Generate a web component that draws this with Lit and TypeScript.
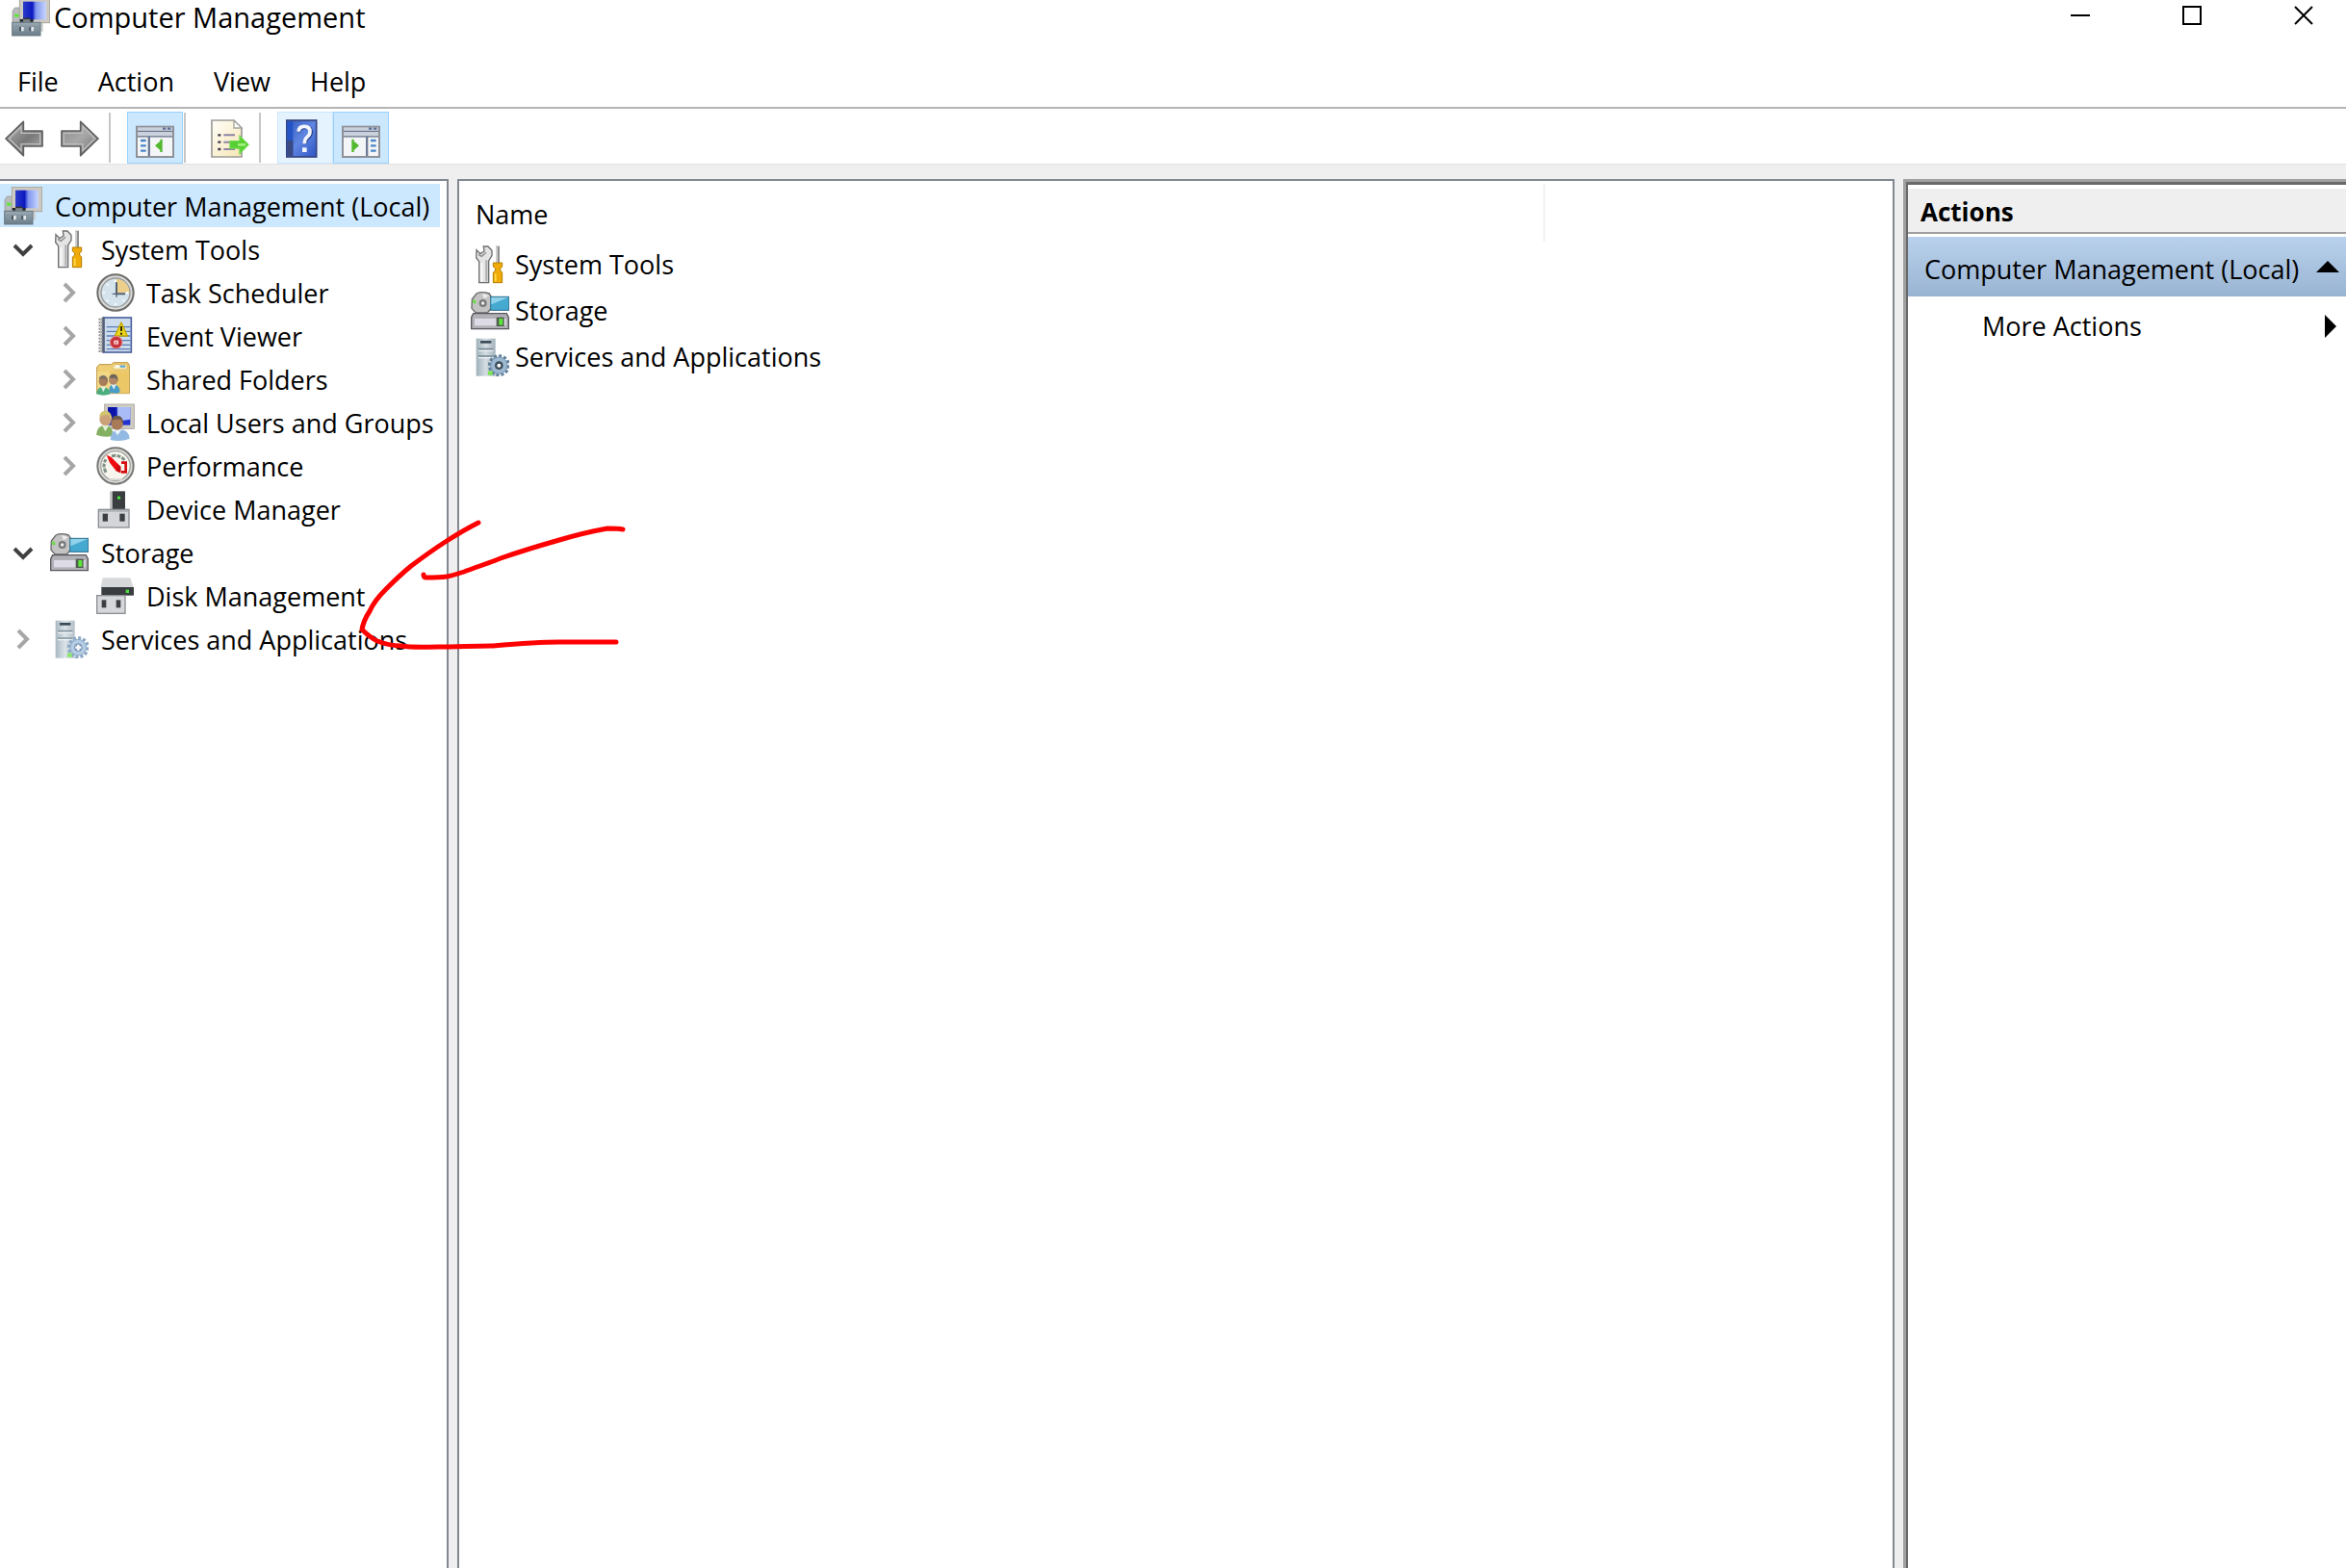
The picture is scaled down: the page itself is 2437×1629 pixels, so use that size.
import { LitElement, html, css, svg, nothing, type SVGTemplateResult } from "lit";
import { customElement, property, state } from "lit/decorators.js";
import { classMap } from "lit/directives/class-map.js";

/** Icon artwork, drawn on a 120-unit square. */
const ICONS: Record<string, SVGTemplateResult> = {
  computer: svg`
    <defs>
      <linearGradient id="scr" x1="0" y1="0" x2="1" y2="0">
        <stop offset="0" stop-color="#2a3cc8"/><stop offset=".4" stop-color="#0c18c0"/>
        <stop offset=".55" stop-color="#7f95ee"/><stop offset="1" stop-color="#c9d6ff"/>
      </linearGradient>
      <linearGradient id="box" x1="0" y1="0" x2="0" y2="1">
        <stop offset="0" stop-color="#9aa9b2"/><stop offset="1" stop-color="#6b7e89"/>
      </linearGradient>
    </defs>
    <path d="M3 40 L10 30 H30 V76 H3Z" fill="#b9bcbc" stroke="#8c9090" stroke-width="2"/>
    <rect x="9" y="50" width="14" height="9" fill="#5ee63c"/>
    <rect x="25" y="1" width="94" height="76" fill="#cdcac2" stroke="#a8a59d" stroke-width="3"/>
    <rect x="36" y="11" width="72" height="56" fill="url(#scr)"/>
    <path d="M78 78 H98 V104 H90Z" fill="#cccdcd"/>
    <path d="M26 76 L34 66 H60 L68 76Z" fill="#80868a"/>
    <path d="M26 70 H36 M58 70 H68" stroke="#22262c" stroke-width="8"/>
    <path d="M36 64 H58" stroke="#30353c" stroke-width="5"/>
    <rect x="2" y="76" width="88" height="41" fill="url(#box)" stroke="#687984" stroke-width="3"/>
    <path d="M3 89 H89" stroke="#8494a0" stroke-width="3"/>
    <path d="M27 90 V103 M58 90 V103" stroke="#4a5660" stroke-width="6"/>
    <path d="M34 90 V103 M65 90 V103" stroke="#e4e8ea" stroke-width="8"/>`,
  tools: svg`
    <path d="M18 14 L30 26 L42 18 L40 3 H54 L66 16 V32 L56 48 V116 H26 V50 L17 38Z" fill="#e4e4e4" stroke="#6e6e6e" stroke-width="4"/>
    <path d="M34 54 V112" stroke="#fafafa" stroke-width="6"/>
    <path d="M49 46 V112" stroke="#ababab" stroke-width="6"/>
    <path d="M24 28 L34 34 L48 22" stroke="#8a8a8a" stroke-width="4" fill="none"/>
    <path d="M84 2 V54" stroke="#8f8f8f" stroke-width="12"/>
    <path d="M81 4 V54" stroke="#dcdcdc" stroke-width="5"/>
    <path d="M70 54 H98 V66 L92 72 V78 L98 84 V116 H70 V84 L77 78 V72 L70 66Z" fill="#f0ab08" stroke="#b57c00" stroke-width="3"/>
    <path d="M77 88 V112" stroke="#ffdd4c" stroke-width="5"/>`,
  clock: svg`
    <circle cx="60" cy="60" r="56" fill="#d9d9d7" stroke="#6b6b69" stroke-width="6"/>
    <circle cx="60" cy="60" r="45" fill="#d5e3ec" stroke="#94989a" stroke-width="4"/>
    <path d="M62 17 A43 43 0 0 1 103 60 H62Z" fill="#edcf8c"/>
    <path d="M60 20 V27 M60 93 V100 M20 60 H27 M93 60 H100 M33 33 L37 37 M33 87 L37 83 M87 87 L83 83" stroke="#f8fbfc" stroke-width="6"/>
    <path d="M63 28 V64 H90" fill="none" stroke="#536273" stroke-width="6"/>
    <path d="M50 64 H63 V74" fill="none" stroke="#536273" stroke-width="4"/>`,
  events: svg`
    <rect x="22" y="3" width="87" height="108" fill="#cddcec" stroke="#4e639e" stroke-width="5"/>
    <path d="M32 32 H106 M32 46 H106 M32 60 H106 M32 74 H106 M32 88 H106 M32 101 H106" stroke="#5b7db8" stroke-width="4"/>
    <path d="M22 2 V112" stroke="#56607c" stroke-width="9"/>
    <path d="M14 5 V111" stroke="#8d8d8d" stroke-width="13" stroke-dasharray="6 4"/>
    <path d="M14 5 V111" stroke="#c6c6c6" stroke-width="4"/>
    <path d="M78 18 L97 60 H58Z" fill="#ecd51c" stroke="#c2a800" stroke-width="4" stroke-linejoin="round"/>
    <path d="M78 30 V45 M78 50 V56" stroke="#332e00" stroke-width="6"/>
    <circle cx="62" cy="80" r="19" fill="#c8323a" stroke="#e58d90" stroke-width="3"/>
    <rect x="55" y="74" width="14" height="12" fill="#fbe9e9"/>
    <path d="M58 77 L66 83 M66 77 L58 83" stroke="#c8323a" stroke-width="2"/>`,
  shared: svg`
    <g transform="translate(0 8)">
    <path d="M2 14 L10 6 H46 L54 0 H98 L103 8 V96 H2Z" fill="#efce74" stroke="#bb9440" stroke-width="3"/>
    <path d="M50 14 L56 6 H96 V22 H54Z" fill="#f6e6b0" stroke="#cfaa52" stroke-width="2"/>
    <path d="M60 12 H74" stroke="#ffffff" stroke-width="6"/>
    <path d="M74 12 H90" stroke="#4aa2dc" stroke-width="6"/>
    <path d="M3 28 H101 V95 H3Z" fill="#f3d785"/>
    <path d="M40 28 H101 V95 H70Z" fill="#ebc765"/>
    <path d="M40 94 Q38 68 54 68 Q73 70 74 92 L66 96Z" fill="#4a9cc8"/>
    <path d="M46 68 L55 84 L62 68Z" fill="#e0eef6"/>
    <circle cx="53" cy="55" r="14" fill="#b08866"/>
    <path d="M40 48 Q42 36 54 36 Q69 37 67 58 L60 48Z" fill="#6a645c"/>
    <path d="M0 98 Q2 76 22 76 Q42 78 44 98 Q24 106 0 98Z" fill="#4cae7e"/>
    <path d="M14 75 L22 92 L30 75Z" fill="#d9efe2"/>
    <circle cx="22" cy="59" r="14" fill="#a87c58"/>
    <path d="M8 52 Q10 40 22 40 Q36 41 36 60 L28 50Z" fill="#7a7064"/>
    </g>`,
  users: svg`
    <rect x="26" y="3" width="92" height="76" fill="#cfccc4" stroke="#aeaba3" stroke-width="3"/>
    <rect x="36" y="12" width="70" height="56" fill="#2333d2"/>
    <path d="M66 12 H106 V50 L66 56Z" fill="#a9bcf8"/>
    <path d="M36 12 H62 V44 H36Z" fill="#0c14a8"/>
    <path d="M0 98 Q2 68 28 68 Q54 70 52 102 Q24 108 0 98Z" fill="#84b062"/>
    <path d="M18 68 L28 88 L40 68Z" fill="#e2efd6"/>
    <circle cx="29" cy="50" r="19" fill="#cba27a"/>
    <path d="M10 44 Q10 22 30 23 Q50 26 48 52 L38 36 L20 38Z" fill="#d2c470"/>
    <path d="M44 114 Q44 82 72 80 Q102 82 104 110 Q76 122 44 114Z" fill="#93bae2"/>
    <path d="M54 80 L66 100 L80 80Z" fill="#eef5fc"/>
    <circle cx="65" cy="64" r="19" fill="#a87a58"/>
    <path d="M46 54 Q50 38 66 38 Q86 40 84 66 L76 50 L56 50Z" fill="#6a5a4c"/>`,
  performance: svg`
    <circle cx="60" cy="60" r="56" fill="#dcdcda" stroke="#777775" stroke-width="6"/>
    <circle cx="60" cy="60" r="46" fill="#f7f5ee" stroke="#a2a29f" stroke-width="4"/>
    <path d="M30 80 Q18 58 30 40 M48 29 Q74 24 88 42" fill="none" stroke="#7e9084" stroke-width="9" stroke-dasharray="12 4"/>
    <path d="M32 26 L46 32 L76 62 V82 L62 76 L42 50Z" fill="#f00c10"/>
    <path d="M62 76 L66 54 L76 62 V82Z" fill="#c80c10"/>
    <path d="M78 50 H92 V79 H78" fill="none" stroke="#d60c10" stroke-width="8"/>
    <path d="M40 102 H82" stroke="#dad8d0" stroke-width="5"/>`,
  device: svg`
    <path d="M42 4 H50 V62 H42Z" fill="#c4c6c8"/>
    <rect x="50" y="4" width="40" height="56" fill="#3b3e40"/>
    <rect x="66" y="20" width="9" height="9" fill="#46e63c"/>
    <rect x="7" y="61" width="95" height="56" fill="#d3d5d9" stroke="#8c8f94" stroke-width="4"/>
    <path d="M9 66 H100" stroke="#a6a9ae" stroke-width="4"/>
    <rect x="20" y="74" width="16" height="24" fill="#3c3f42"/>
    <rect x="73" y="74" width="16" height="24" fill="#3c3f42"/>`,
  storage: svg`
    <path d="M4 24 L18 6 Q34 -2 58 6 L68 22 V46 L52 66 H16 L3 52Z" fill="#c3c3c3" stroke="#6a6a6a" stroke-width="4"/>
    <circle cx="38" cy="36" r="12" fill="#77797b"/>
    <circle cx="38" cy="36" r="5" fill="#f2f2f2"/>
    <path d="M36 6 L42 22 L56 12Z" fill="#efefef"/>
    <path d="M8 26 L14 36" stroke="#6cdc4a" stroke-width="9"/>
    <rect x="62" y="16" width="57" height="42" fill="#46a9d0" stroke="#2a6f90" stroke-width="3"/>
    <path d="M64 18 H117 L64 40Z" fill="#8fd2ea"/>
    <path d="M8 68 H112 L118 80 V116 H2 V80Z" fill="#b2b1b8" stroke="#58585e" stroke-width="4"/>
    <rect x="12" y="84" width="98" height="22" fill="#dddce6"/>
    <rect x="80" y="80" width="24" height="28" fill="#4f5c4e"/>
    <rect x="88" y="84" width="12" height="20" fill="#5ce63a"/>`,
  disk: svg`
    <path d="M20 4 H106 L116 34 H14Z" fill="#d6d8da"/>
    <rect x="16" y="33" width="101" height="26" fill="#393d40"/>
    <rect x="92" y="41" width="10" height="10" fill="#48e03c"/>
    <rect x="2" y="59" width="88" height="56" fill="#d6d7db" stroke="#8c8f94" stroke-width="4"/>
    <rect x="17" y="73" width="14" height="24" fill="#3c3f42"/>
    <rect x="62" y="73" width="14" height="24" fill="#3c3f42"/>`,
  services: svg`
    <defs><linearGradient id="twr" x1="0" y1="0" x2="1" y2="0">
      <stop offset="0" stop-color="#9fb0bb"/><stop offset=".5" stop-color="#d4dee3"/><stop offset="1" stop-color="#a4b2bb"/>
    </linearGradient></defs>
    <rect x="17" y="2" width="60" height="117" fill="url(#twr)"/>
    <rect x="30" y="9" width="34" height="8" fill="#3b4b57"/>
    <path d="M24 35 H70 M24 57 H70" stroke="#768893" stroke-width="5"/>
    <path d="M24 40 H70 M24 62 H70" stroke="#eef3f5" stroke-width="4"/>
    <circle cx="88" cy="86" r="29" fill="none" stroke="#62809a" stroke-width="11" stroke-dasharray="9 6"/>
    <circle cx="88" cy="86" r="26" fill="#9db9d2" stroke="#7393b0" stroke-width="3"/>
    <circle cx="88" cy="86" r="13" fill="#3d4c5a"/>
    <circle cx="88" cy="86" r="6" fill="#ffffff"/>
    <rect x="54" y="104" width="14" height="12" fill="#7ae64c"/>`,
  servicesLight: svg`
    <defs><linearGradient id="twl" x1="0" y1="0" x2="1" y2="0">
      <stop offset="0" stop-color="#a9b8c2"/><stop offset=".5" stop-color="#dbe3e8"/><stop offset="1" stop-color="#b2bec6"/>
    </linearGradient></defs>
    <rect x="17" y="2" width="60" height="117" fill="url(#twl)"/>
    <rect x="30" y="9" width="34" height="8" fill="#3b4b57"/>
    <path d="M24 35 H70 M24 57 H70" stroke="#8496a0" stroke-width="5"/>
    <path d="M24 40 H70 M24 62 H70" stroke="#f2f6f8" stroke-width="4"/>
    <circle cx="88" cy="86" r="29" fill="none" stroke="#8ba8c6" stroke-width="11" stroke-dasharray="9 6"/>
    <circle cx="88" cy="86" r="25" fill="#b4cce4" stroke="#8cabca" stroke-width="3"/>
    <circle cx="88" cy="86" r="13" fill="#7f9ab8"/>
    <path d="M88 77 V95 M79 86 H97" stroke="#ffffff" stroke-width="7"/>
    <rect x="54" y="104" width="14" height="12" fill="#8ae868"/>`,
  back: svg`
    <defs><linearGradient id="arr" x1="0" y1="0" x2="1" y2="1">
      <stop offset="0" stop-color="#b4b4b4"/><stop offset=".55" stop-color="#787878"/><stop offset="1" stop-color="#b0b0b0"/>
    </linearGradient></defs>
    <path d="M3 60 L58 7 V36 H117 V84 H58 V113Z" fill="url(#arr)" stroke="#5f5f5f" stroke-width="5" stroke-linejoin="round"/>
    <path d="M13 60 L51 23 V43 H110 V77 H51 V97Z" fill="none" stroke="#bdbdbd" stroke-width="4"/>`,
  forward: svg`
    <defs><linearGradient id="arf" x1="0" y1="0" x2="1" y2="1">
      <stop offset="0" stop-color="#8a8a8a"/><stop offset=".5" stop-color="#a8a8a8"/><stop offset="1" stop-color="#6e6e6e"/>
    </linearGradient></defs>
    <path d="M117 60 L62 7 V36 H3 V84 H62 V113Z" fill="url(#arf)" stroke="#5f5f5f" stroke-width="5" stroke-linejoin="round"/>
    <path d="M107 60 L69 23 V43 H10 V77 H69 V97Z" fill="none" stroke="#bdbdbd" stroke-width="4"/>`,
  treePane: svg`
    <rect x="3" y="23" width="114" height="94" fill="#f4f5f6" stroke="#8e9298" stroke-width="6"/>
    <rect x="6" y="26" width="108" height="8" fill="#c9d0dc"/>
    <path d="M84 29 H94 M99 29 H109" stroke="#5d6f96" stroke-width="7"/>
    <rect x="6" y="35" width="108" height="5" fill="#6b7790"/>
    <rect x="6" y="40" width="108" height="11" fill="#ccd2dc"/>
    <rect x="6" y="51" width="108" height="5" fill="#848da0"/>
    <rect x="38" y="54" width="7" height="60" fill="#6d7a96"/>
    <path d="M15 66 H32 M15 82 H32 M15 98 H32" stroke="#4a86c8" stroke-width="7"/>
    <path d="M83 62 V102 H76 V96 L60 82 L76 68 V62Z" fill="#52b82e"/>`,
  actionPane: svg`
    <rect x="3" y="23" width="114" height="94" fill="#f4f5f6" stroke="#8e9298" stroke-width="6"/>
    <rect x="6" y="26" width="108" height="8" fill="#c9d0dc"/>
    <path d="M84 29 H94 M99 29 H109" stroke="#5d6f96" stroke-width="7"/>
    <rect x="6" y="35" width="108" height="5" fill="#6b7790"/>
    <rect x="6" y="40" width="108" height="11" fill="#ccd2dc"/>
    <rect x="6" y="51" width="108" height="5" fill="#848da0"/>
    <rect x="75" y="54" width="7" height="60" fill="#6d7a96"/>
    <path d="M90 66 H107 M90 82 H107 M90 98 H107" stroke="#4a86c8" stroke-width="7"/>
    <path d="M31 62 V102 H38 V96 L54 82 L38 68 V62Z" fill="#52b82e"/>`,
  exportList: svg`
    <defs><linearGradient id="pg" x1="0" y1="0" x2="1" y2="1">
      <stop offset="0" stop-color="#fffefa"/><stop offset="1" stop-color="#f6e6b4"/>
    </linearGradient></defs>
    <path d="M3 3 H72 L96 27 V117 H3Z" fill="url(#pg)" stroke="#9b9a96" stroke-width="5"/>
    <path d="M72 3 V27 H96Z" fill="#ffffff" stroke="#a5a4a0" stroke-width="4"/>
    <path d="M22 49 H31 M22 71 H31 M22 93 H31" stroke="#3b3a4a" stroke-width="7"/>
    <path d="M40 49 H75 M40 71 H70 M40 93 H75" stroke="#8d85a2" stroke-width="6"/>
    <path d="M60 68 H90 V52 L117 79 L90 106 V90 H60Z" fill="#55cf32" stroke="#6fd84c" stroke-width="4"/>
    <path d="M84 79 H108" stroke="#a2f07e" stroke-width="8"/>`,
  help: svg`
    <defs><linearGradient id="hb" x1="0" y1="0" x2="1" y2="1">
      <stop offset="0" stop-color="#3459bc"/><stop offset=".5" stop-color="#5f86e2"/><stop offset="1" stop-color="#2e55c4"/>
    </linearGradient></defs>
    <g transform="translate(-12 0)">
    <rect x="14" y="3" width="93" height="114" fill="url(#hb)" stroke="#35437e" stroke-width="5"/>
    <rect x="16" y="6" width="18" height="108" fill="#2454c6"/>
    <rect x="16" y="66" width="18" height="48" fill="#3a4a82"/>
    <path d="M54 40 Q54 24 71 24 Q90 24 90 40 Q90 50 80 57 Q72 63 72 76" fill="none" stroke="#263e88" stroke-width="12"/>
    <path d="M52 38 Q52 22 69 22 Q87 22 87 38 Q87 48 78 55 Q70 61 70 76" fill="none" stroke="#f2f5fc" stroke-width="11"/>
    <rect x="63" y="88" width="14" height="14" fill="#f2f5fc"/>
    </g>`,
};

@customElement("mmc-icon")
class MmcIcon extends LitElement {
  @property() name = "";
  static styles = css`
    :host { display: block; flex: none; width: 40px; height: 40px; }
    .art { display: block; width: 100%; height: 100%; }
  `;
  render() {
    return html`<svg class="art" viewBox="0 0 120 120" aria-hidden="true">${ICONS[this.name]}</svg>`;
  }
}

interface TreeNode {
  label: string;
  icon: string;
  level: number;
  expand?: "open" | "closed";
}

const NODES: TreeNode[] = [
  { label: "Computer Management (Local)", icon: "computer", level: 0 },
  { label: "System Tools", icon: "tools", level: 1, expand: "open" },
  { label: "Task Scheduler", icon: "clock", level: 2, expand: "closed" },
  { label: "Event Viewer", icon: "events", level: 2, expand: "closed" },
  { label: "Shared Folders", icon: "shared", level: 2, expand: "closed" },
  { label: "Local Users and Groups", icon: "users", level: 2, expand: "closed" },
  { label: "Performance", icon: "performance", level: 2, expand: "closed" },
  { label: "Device Manager", icon: "device", level: 2 },
  { label: "Storage", icon: "storage", level: 1, expand: "open" },
  { label: "Disk Management", icon: "disk", level: 2 },
  { label: "Services and Applications", icon: "servicesLight", level: 1, expand: "closed" },
];

const ITEMS = [
  { label: "System Tools", icon: "tools" },
  { label: "Storage", icon: "storage" },
  { label: "Services and Applications", icon: "services" },
];

@customElement("app-root")
class AppRoot extends LitElement {
  @state() private selected = 0;

  static styles = css`
    :host {
      display: flex; flex-direction: column; position: relative;
      min-height: 100vh; overflow: hidden; background: #efefef; color: #000;
      font: 27px/36px "Open Sans", "Noto Sans", sans-serif;
    }
    * { box-sizing: border-box; }
    button { font: inherit; color: inherit; background: none; border: 0; padding: 0; margin: 0; text-align: left; }

    .chrome { background: #fff; border-bottom: 2px solid #b4b4b4; }
    .titlebar { display: flex; align-items: center; height: 36px; padding-left: 12px; }
    .title { flex: 1; margin: 0; padding-left: 4px; font-size: 29px; line-height: 36px; font-weight: 400; }
    .caption { display: flex; align-self: flex-start; margin-right: -14px; }
    .caption button { width: 116px; height: 32px; display: grid; place-items: center; }
    .caption svg { width: 20px; height: 20px; display: block; }

    .menubar { display: flex; gap: 41px; padding: 31px 18px 8px; }

    .toolbar { display: flex; align-items: center; padding-top: 3px; background: #fff; border-bottom: 1px solid #e2e2e2; }
    .tool { width: 58px; height: 54px; display: grid; place-items: center; padding-top: 2px; border: 1px solid transparent; }
    .tool.first { margin-left: -4px; }
    .tool.on { background: #cce8ff; border-color: #99d1ff; }
    .tool.hot { background: #e5f3ff; border-color: #cce8ff; }
    .sep { width: 2px; height: 52px; margin: 0 17px 0 1px; background: #c6c6c6; }

    .panes { flex: 1; display: grid; grid-template-columns: 466px 1fr 460px; gap: 9px; padding-top: 15px; }
    .pane { background: #fff; border: 2px solid #828790; border-bottom: 0; padding-top: 3px; min-width: 0; }

    .tree { list-style: none; margin: 0; padding: 3px 7px 0 0; border-left: 0; }
    .row { display: flex; align-items: center; height: 45px; padding-left: 4px; }
    .row.level2 { padding-left: 52px; }
    .row.selected { background: #cce8ff; }
    .twisty { width: 40px; height: 40px; margin-right: 8px; display: grid; place-items: center; flex: none; }
    .twisty svg { width: 24px; height: 24px; }
    .label { padding: 2px 0 0 12px; white-space: nowrap; }
    .label.wide { padding-left: 13px; }

    .list { border-collapse: collapse; width: 100%; table-layout: fixed; }
    .list th { height: 60px; padding: 3px 0 0 17px; font-weight: 400; text-align: left; }
    .list .name { width: 1127px; border-right: 2px solid #f2f2f2; }
    .list td { padding: 0 0 0 12px; }
    .item { display: flex; align-items: center; gap: 6px; height: 48px; }

    .actions { display: flex; background: #fff; border: 3px solid #a0a0a0; border-width: 3px 0 0 3px; min-width: 0; }
    .inner { flex: 1; border: 2px solid #696969; border-width: 3px 0 0 2px; }
    .heading { margin: 4px 0 0; padding: 6px 13px 3px; background: #efefef; border-bottom: 2px solid #a0a0a0; font-size: 26px; font-weight: 700; }
    .group { display: flex; align-items: center; justify-content: space-between; width: 100%; height: 62px; margin-top: 3px; padding: 6px 7px 0 17px; background: linear-gradient(#b9d1ec, #99b4d2); }
    .more { display: flex; align-items: center; justify-content: space-between; width: 100%; height: 62px; padding: 0 9px 0 77px; }
    .up { width: 24px; height: 24px; }
    .right { width: 14px; height: 24px; }

    .ink { position: absolute; left: 0; top: 0; width: 700px; height: 700px; pointer-events: none; }
  `;

  private tool(icon: string, label: string, cls = "") {
    return html`<button class="tool ${cls}" aria-label=${label}><mmc-icon name=${icon}></mmc-icon></button>`;
  }

  private twisty(node: TreeNode) {
    if (node.level === 0) return nothing;
    if (!node.expand) return html`<span class="twisty"></span>`;
    const open = node.expand === "open";
    return html`<button class="twisty" aria-label=${open ? "Collapse" : "Expand"}>
      <svg viewBox="0 0 24 24" fill="none" stroke-width="4">
        ${open
          ? svg`<path d="M3 8 L12 17 L21 8" stroke="#404040"/>`
          : svg`<path d="M7 3 L16 12 L7 21" stroke="#a6a6a6"/>`}
      </svg>
    </button>`;
  }

  render() {
    return html`
      <header class="chrome">
        <div class="titlebar">
          <mmc-icon name="computer"></mmc-icon>
          <h1 class="title">Computer Management</h1>
          <div class="caption">
            <button aria-label="Minimize"><svg viewBox="0 0 20 20"><path d="M0 10 H20" stroke="#000" stroke-width="2"/></svg></button>
            <button aria-label="Maximize"><svg viewBox="0 0 20 20"><path d="M1 1 H19 V19 H1Z" fill="none" stroke="#000" stroke-width="2"/></svg></button>
            <button aria-label="Close"><svg viewBox="0 0 20 20"><path d="M1 1 L19 19 M19 1 L1 19" stroke="#000" stroke-width="2"/></svg></button>
          </div>
        </div>
        <nav class="menubar">
          ${["File", "Action", "View", "Help"].map((m) => html`<button>${m}</button>`)}
        </nav>
      </header>

      <div class="toolbar" role="toolbar">
        ${this.tool("back", "Back", "first")}${this.tool("forward", "Forward")}
        <span class="sep"></span>
        ${this.tool("treePane", "Show or hide console tree", "on")}
        <span class="sep"></span>
        ${this.tool("exportList", "Export list")}
        <span class="sep"></span>
        ${this.tool("help", "Help", "hot")}${this.tool("actionPane", "Show or hide action pane", "on")}
      </div>

      <main class="panes">
        <ul class="pane tree" role="tree">
          ${NODES.map((n, i) => html`
            <li class=${classMap({ row: true, level2: n.level === 2, selected: i === this.selected })}
                role="treeitem" aria-level=${n.level + 1} @click=${() => (this.selected = i)}>
              ${this.twisty(n)}
              <mmc-icon name=${n.icon}></mmc-icon>
              <span class=${classMap({ label: true, wide: n.level < 2 })}>${n.label}</span>
            </li>`)}
        </ul>

        <section class="pane">
          <table class="list">
            <thead><tr><th class="name" scope="col">Name</th><th></th></tr></thead>
            <tbody>
              ${ITEMS.map((it) => html`<tr><td colspan="2">
                <div class="item"><mmc-icon name=${it.icon}></mmc-icon><span>${it.label}</span></div>
              </td></tr>`)}
            </tbody>
          </table>
        </section>

        <aside class="actions">
          <div class="inner">
            <h2 class="heading">Actions</h2>
            <button class="group">
              <span>Computer Management (Local)</span>
              <svg class="up" viewBox="0 0 24 24"><path d="M0 15 L12 3 L24 15Z"/></svg>
            </button>
            <button class="more">
              <span>More Actions</span>
              <svg class="right" viewBox="0 0 14 24"><path d="M1 0 L13 12 L1 24Z"/></svg>
            </button>
          </div>
        </aside>
      </main>

      <svg class="ink" viewBox="0 0 700 700" fill="none" stroke="#ff0000" stroke-width="5" stroke-linecap="round" stroke-linejoin="round" aria-hidden="true">
        <path d="M497 543 C485 549 475 555 464 562 C450 571 439 579 427 588 C416 597 409 604 401 612 C393 620 387 628 384 635 C380 641 377 648 376 654 C381 659 386 663 392 666 C400 669 408 671 416 671 C430 673 442 672 455 672 C474 672 493 671 512 671 C535 669 558 667 581 667 C600 667 620 667 640 667"/>
        <path d="M440 597 C440 599 441 600 443 600 C450 600 457 600 464 599 C470 598 476 596 482 594 C495 589 508 585 520 580 C540 573 560 567 581 561 C598 556 614 552 631 549 C636 549 642 549 647 550"/>
      </svg>
    `;
  }
}
